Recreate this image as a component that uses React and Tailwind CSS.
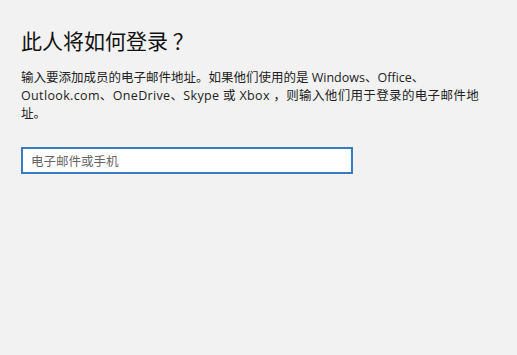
import React from "react";

export default function App() {
  return (
    <div
      className="h-[355px] w-[517px] overflow-hidden bg-[#f2f2f2] px-[21px] pt-[26px] text-[#1a1a1a]"
      style={{ fontFamily: '"Noto Sans CJK SC", "Open Sans", sans-serif' }}
    >
      <h1 className="text-[21px] leading-[28px] font-normal text-[#111]">此人将如何登录 ？</h1>
      <p
        className="mt-[15px] text-[12.5px] leading-[18px] text-[#222]"
        style={{ fontFamily: '"Open Sans", "Noto Sans CJK SC", sans-serif' }}
      >
        输入要添加成员的电子邮件地址。如果他们使用的是 Windows、Office、
        <br />
        <span className="tracking-[0.35px]">
          Outlook.com、OneDrive、Skype 或 Xbox ，则输入他们用于登录的电子邮件地
        </span>
        <br />
        址。
      </p>
      <input
        className="mt-[24px] block h-[27px] w-[332px] border-2 border-[#3a7cc4] bg-white px-[8px] text-[12.5px] text-[#333] placeholder:text-[#666] outline-none"
        placeholder="电子邮件或手机"
      />
    </div>
  );
}
